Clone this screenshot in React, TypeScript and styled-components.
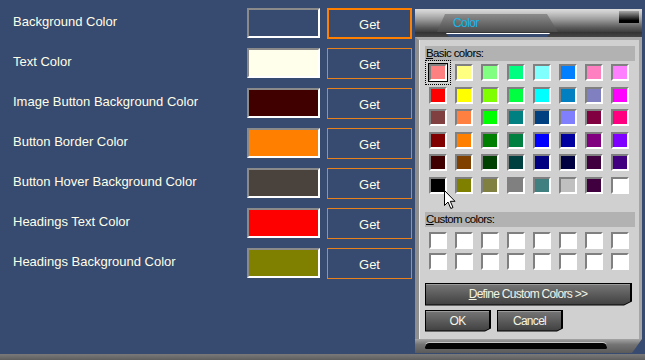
import React from "react";
import styled, { createGlobalStyle } from "styled-components";

const GlobalStyle = createGlobalStyle`
  html, body {
    margin: 0;
    padding: 0;
    background: #374a70;
  }
`;

const Page = styled.div`
  width: 645px;
  height: 360px;
  display: flex;
  flex-direction: column;
  background: #374a70;
  overflow: hidden;
  font-family: "Liberation Sans", Arial, sans-serif;
`;

const Workspace = styled.div`
  flex: 1;
  position: relative;
`;

const BottomBar = styled.div`
  height: 6px;
  background: linear-gradient(#7a7a7a, #5e5e5e);
`;

const Form = styled.div`
  display: grid;
  grid-template-columns: 227px 73px 85px;
  grid-auto-rows: 31px;
  column-gap: 7px;
  row-gap: 9px;
  padding: 8px 0 0 13px;
`;

const Label = styled.span`
  align-self: center;
  font-size: 13px;
  color: #ffffe8;
  margin-top: -5px;
`;

const Swatch = styled.div<{ $color: string }>`
  height: 30px;
  box-sizing: border-box;
  background: ${(p) => p.$color};
  border: 2px solid;
  border-color: #8a8a8a #ffffff #ffffff #8a8a8a;
`;

const GetButton = styled.button<{ $focused?: boolean }>`
  height: 31px;
  box-sizing: border-box;
  background: transparent;
  border: ${(p) => (p.$focused ? "2px solid #ff8000" : "1px solid #e8801c")};
  color: #ffffe8;
  font-family: "Liberation Sans", Arial, sans-serif;
  font-size: 13px;
  padding: 0;
  padding-top: 2px;
  cursor: pointer;
`;

/* ---- colour dialog ---- */

const Dialog = styled.div`
  position: absolute;
  left: 415px;
  top: 9px;
  width: 227px;
  height: 344px;
  display: flex;
  flex-direction: column;
  font-family: "Liberation Sans", Arial, sans-serif;
  font-size: 11.5px;
  letter-spacing: -0.6px;
`;

const TitleBar = styled.div`
  height: 28px;
  display: flex;
  flex-direction: column;
`;

const TitleRow = styled.div`
  height: 23px;
  display: flex;
  background: linear-gradient(#dcdcdc 0%, #c6c6c6 18%, #9c9c9c 45%, #5c5c5c 80%, #3e3e3e 100%);
`;

const Tab = styled.div`
  margin: 5px 0 0 22px;
  width: 121px;
  height: 18px;
  box-sizing: border-box;
  padding: 1px 0 0 16px;
  background: linear-gradient(#8c8c8c, #4c4c4c);
  clip-path: polygon(8px 0, 110px 0, 100% 100%, 0 100%);
  color: #18b4e8;
  font-size: 12px;
  line-height: 16px;
`;

const CloseBox = styled.div`
  margin: 2px 3px 0 auto;
  width: 20px;
  height: 12px;
  background: linear-gradient(#a8a8a8, #000000 80%);
`;

const SlotRow = styled.div`
  height: 5px;
  background: linear-gradient(#333333, #454545);
`;

const TitleSlot = styled.div`
  margin: 1px 0 0 31px;
  width: 104px;
  height: 4px;
  box-sizing: border-box;
  background: #374a70;
  border-top: 1px solid #ffffff;
  clip-path: polygon(0 0, 100% 0, calc(100% - 3px) 100%, 3px 100%);
`;

const Body = styled.div`
  flex: 1;
  position: relative;
  box-sizing: border-box;
  background: #d0d0d0;
  border-left: 4px solid #8e8e8e;
  border-right: 3px solid #a6a6a6;
  border-top: 3px solid #a9a9a9;
  box-shadow: inset 1px 0 #ececec;
  padding: 6px 4px 0 6px;
  display: flex;
  flex-direction: column;
`;

const SectionHeader = styled.div<{ $gap?: number }>`
  height: 15px;
  line-height: 15px;
  margin-top: ${(p) => p.$gap ?? 0}px;
  padding-left: 1px;
  background: #b2b2b2;
  color: #000;
`;

const ColorGrid = styled.div<{ $rowGap: number; $top: number }>`
  display: grid;
  grid-template-columns: repeat(8, 18px);
  grid-auto-rows: 17px;
  column-gap: 8px;
  row-gap: ${(p) => p.$rowGap}px;
  margin: ${(p) => p.$top}px 0 0 4px;
`;

const ColorCell = styled.div<{ $color: string; $selected?: boolean }>`
  box-sizing: border-box;
  background: ${(p) => p.$color};
  border: 2px solid;
  border-color: #808080 #ffffff #ffffff #808080;
  ${(p) =>
    p.$selected &&
    `
    box-shadow: 0 0 0 1px #000;
    outline: 1px dotted #000;
    outline-offset: 3px;
  `}
`;

const ButtonSlot = styled.div<{ $top: number }>`
  display: flex;
  gap: 6px;
  margin-top: ${(p) => p.$top}px;
`;

const ButtonFrame = styled.div<{ $width: number; $height: number; $notch: number }>`
  width: ${(p) => p.$width}px;
  height: ${(p) => p.$height}px;
  background: #000;
  padding: 1px 2px 1px 1px;
  box-sizing: border-box;
  clip-path: polygon(
    0 0,
    100% 0,
    100% calc(100% - ${(p) => p.$notch}px),
    calc(100% - ${(p) => p.$notch * 2}px) 100%,
    0 100%
  );
`;

const ButtonFace = styled.button<{ $notch: number }>`
  width: 100%;
  height: 100%;
  border: 0;
  padding: 0;
  background: linear-gradient(#767676, #404040);
  color: #f4f4e4;
  font-family: "Liberation Sans", Arial, sans-serif;
  font-size: 12px;
  letter-spacing: -0.7px;
  box-shadow: inset 0 1px #9a9a9a;
  clip-path: polygon(
    0 0,
    100% 0,
    100% calc(100% - ${(p) => p.$notch - 1}px),
    calc(100% - ${(p) => p.$notch * 2 - 2}px) 100%,
    0 100%
  );
`;

const Footer = styled.div`
  height: 14px;
  box-sizing: border-box;
  padding: 4px 35px 0 10px;
  background: linear-gradient(#a4a4a4, #747474 40%, #5a5a5a);
  clip-path: polygon(0 0, 100% 0, calc(100% - 10px) 100%, 0 100%);
`;

const FooterSlot = styled.div`
  height: 6px;
  border-radius: 6px 6px 2px 2px;
  background: #050505;
  box-shadow: 0 -1px 0 #c8c8c8;
`;

const Pointer = styled.svg`
  position: absolute;
  left: 25px;
  top: 150px;
`;

const rows = [
  { label: "Background Color", color: "#374a70" },
  { label: "Text Color", color: "#ffffeb" },
  { label: "Image Button Background Color", color: "#400000" },
  { label: "Button Border Color", color: "#ff8000" },
  { label: "Button Hover Background Color", color: "#4a423c" },
  { label: "Headings Text Color", color: "#ff0000" },
  { label: "Headings Background Color", color: "#808000" },
];

const basicColors = [
  "#ff8080", "#ffff80", "#80ff80", "#00ff80", "#80ffff", "#0080ff", "#ff80c0", "#ff80ff",
  "#ff0000", "#ffff00", "#80ff00", "#00ff40", "#00ffff", "#0080c0", "#8080c0", "#ff00ff",
  "#804040", "#ff8040", "#00ff00", "#008080", "#004080", "#8080ff", "#800040", "#ff0080",
  "#800000", "#ff8000", "#008000", "#008040", "#0000ff", "#0000a0", "#800080", "#8000ff",
  "#400000", "#804000", "#004000", "#004040", "#000080", "#000040", "#400040", "#400080",
  "#000000", "#808000", "#808040", "#808080", "#408080", "#c0c0c0", "#400040", "#ffffff",
];

const customColors = Array.from({ length: 16 }, () => "#ffffff");

function DialogButton({
  width,
  height,
  notch,
  children,
}: {
  width: number;
  height: number;
  notch: number;
  children: React.ReactNode;
}) {
  return (
    <ButtonFrame $width={width} $height={height} $notch={notch}>
      <ButtonFace $notch={notch}>{children}</ButtonFace>
    </ButtonFrame>
  );
}

function ColorDialog() {
  return (
    <Dialog>
      <TitleBar>
        <TitleRow>
          <Tab>Color</Tab>
          <CloseBox />
        </TitleRow>
        <SlotRow>
          <TitleSlot />
        </SlotRow>
      </TitleBar>
      <Body>
        <SectionHeader>
          <u>B</u>asic colors:
        </SectionHeader>
        <ColorGrid $rowGap={5.5} $top={3}>
          {basicColors.map((c, i) => (
            <ColorCell key={i} $color={c} $selected={i === 0} />
          ))}
        </ColorGrid>
        <SectionHeader $gap={18}>
          <u>C</u>ustom colors:
        </SectionHeader>
        <ColorGrid $rowGap={4} $top={5}>
          {customColors.map((c, i) => (
            <ColorCell key={i} $color={c} />
          ))}
        </ColorGrid>
        <ButtonSlot $top={13}>
          <DialogButton width={207} height={23} notch={4}>
            <u>D</u>efine Custom Colors &gt;&gt;
          </DialogButton>
        </ButtonSlot>
        <ButtonSlot $top={4}>
          <DialogButton width={66} height={22} notch={3}>
            OK
          </DialogButton>
          <DialogButton width={66} height={22} notch={3}>
            Cancel
          </DialogButton>
        </ButtonSlot>
        <Pointer width="13" height="20" viewBox="0 0 13 20">
          <path
            d="M0.5 0.5 L0.5 15.5 L4 12 L6.8 18.5 L9 17.5 L6.3 11.3 L11 11.3 Z"
            fill="#ffffff"
            stroke="#000000"
            strokeWidth="1"
          />
        </Pointer>
      </Body>
      <Footer>
        <FooterSlot />
      </Footer>
    </Dialog>
  );
}

export default function App() {
  return (
    <Page>
      <GlobalStyle />
      <Workspace>
        <Form>
          {rows.map((r, i) => (
            <React.Fragment key={r.label}>
              <Label>{r.label}</Label>
              <Swatch $color={r.color} />
              <GetButton $focused={i === 0}>Get</GetButton>
            </React.Fragment>
          ))}
        </Form>
        <ColorDialog />
      </Workspace>
      <BottomBar />
    </Page>
  );
}
